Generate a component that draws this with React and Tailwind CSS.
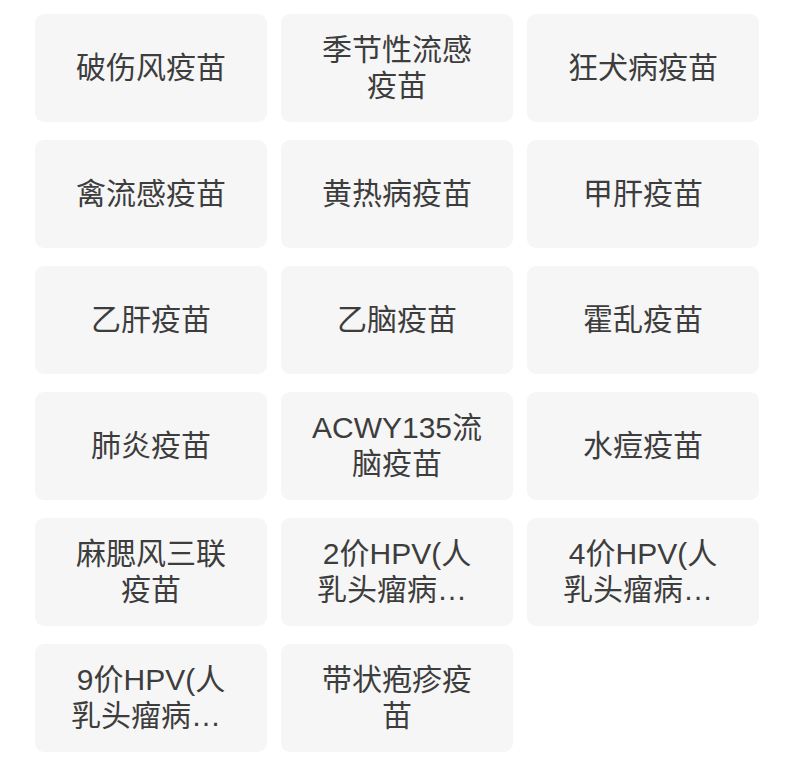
const vaccines = [
  "破伤风疫苗",
  "季节性流感疫苗",
  "狂犬病疫苗",
  "禽流感疫苗",
  "黄热病疫苗",
  "甲肝疫苗",
  "乙肝疫苗",
  "乙脑疫苗",
  "霍乱疫苗",
  "肺炎疫苗",
  "ACWY135流脑疫苗",
  "水痘疫苗",
  "麻腮风三联疫苗",
  "2价HPV(人乳头瘤病毒)疫苗",
  "4价HPV(人乳头瘤病毒)疫苗",
  "9价HPV(人乳头瘤病毒)疫苗",
  "带状疱疹疫苗",
];

export default function App() {
  return (
    <div className="min-h-[780px] w-[800px] bg-white pl-[35px] pr-[41px] pt-[14px]">
      <div className="grid grid-cols-3 gap-x-[14px] gap-y-[18px]">
        {vaccines.map((name) => (
          <div
            key={name}
            className="flex h-[108px] items-center justify-center rounded-[9px] bg-[#f6f6f6] px-7"
          >
            <span
              className="line-clamp-2 text-center text-[30px] leading-[36px] text-[#3d3d3d] [font-family:'Liberation_Sans','Noto_Sans_CJK_SC',sans-serif]"
            >
              {name}
            </span>
          </div>
        ))}
      </div>
    </div>
  );
}
